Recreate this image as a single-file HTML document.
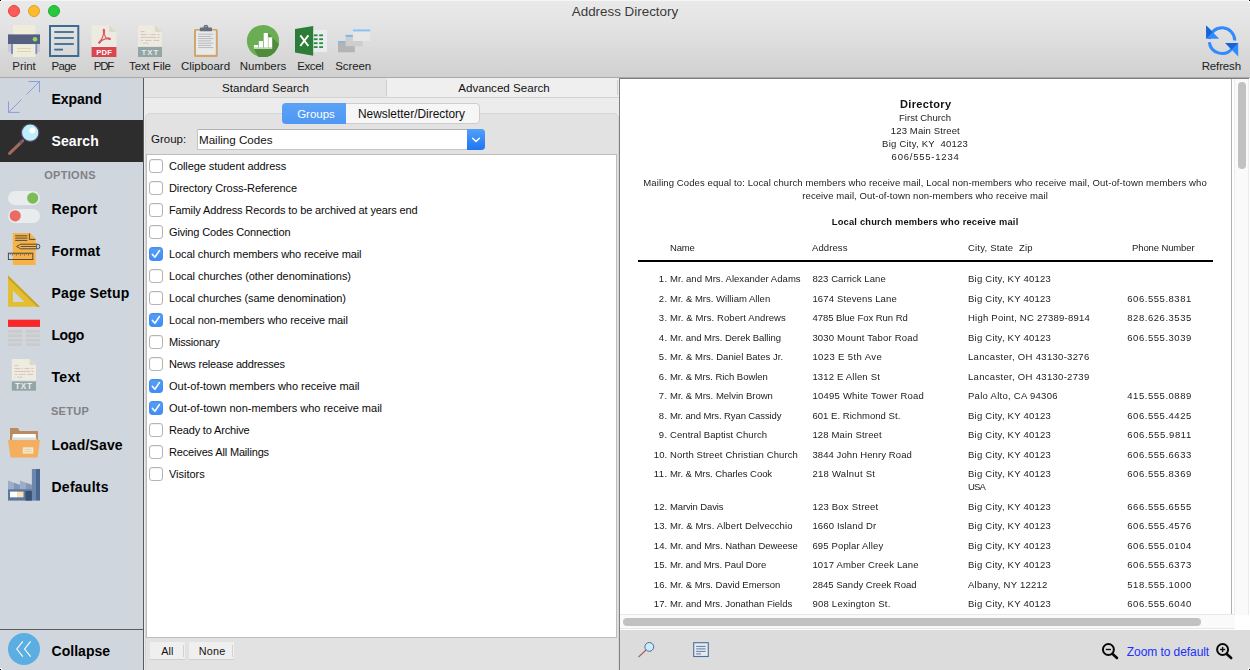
<!DOCTYPE html><html><head><meta charset="utf-8"><title>Address Directory</title><style>
*{box-sizing:border-box;margin:0;padding:0}
html,body{width:1250px;height:670px;overflow:hidden;background:#ececec;font-family:"Liberation Sans",sans-serif;color:#1d1d1d}
.abs{position:absolute}
.t{position:absolute;white-space:pre;line-height:1}
#titlebar{position:absolute;left:0;top:0;width:1250px;height:77px;background:linear-gradient(#e9e9e9 0,#e4e4e4 22px,#d0d0d0 77px);border-top:1px solid #f5f5f5}
#tbline{position:absolute;left:0;top:77px;width:1250px;height:1px;background:#aaaaaa}
.tl{position:absolute;top:5px;width:12px;height:12px;border-radius:50%}
.lbl{position:absolute;top:59px;font-size:11.5px;line-height:14px;text-align:center;width:80px;color:#1c1c1c;white-space:nowrap}
#side{position:absolute;left:0;top:78px;width:143px;height:592px;background:#cfd6de}
#sideline{position:absolute;left:143px;top:78px;width:1px;height:592px;background:#5a5a5a}
.sb{position:absolute;left:52px;font-size:14px;font-weight:700;color:#000;line-height:16px;white-space:nowrap;letter-spacing:0}
.sh{position:absolute;left:0;width:140px;text-align:center;font-size:11px;font-weight:700;color:#808085;line-height:12px;letter-spacing:.3px}
#mid{position:absolute;left:144px;top:78px;width:475px;height:592px;background:#ececec}
#right{position:absolute;left:619px;top:78px;width:631px;height:592px;background:#fff}
.cb{position:absolute;left:149px;width:14px;height:14px;border:1px solid #b4b4b4;border-radius:3px;background:#fff;box-shadow:inset 0 1px 1px rgba(0,0,0,.06)}
.cb.on{border-color:#4590f5;background:linear-gradient(#55a0f8,#3f8df6)}
.ci{position:absolute;left:169px;font-size:11px;line-height:13px;white-space:nowrap;color:#0a0a0a}
.r{position:absolute;white-space:pre;font-size:9.5px;line-height:11px;color:#222}
</style></head><body>
<div id="titlebar"></div><div id="tbline"></div>
<div class="tl" style="left:8px;background:#fc5b57;border:0.5px solid #e2443f"></div>
<div class="tl" style="left:28px;background:#fdbc2e;border:0.5px solid #e0a028"></div>
<div class="tl" style="left:48px;background:#28c840;border:0.5px solid #1dad2b"></div>
<div class="t" style="left:0;width:1250px;text-align:center;top:4px;font-size:13.4px;line-height:15px;color:#3a3a3a;letter-spacing:0">Address Directory</div>
<svg class="abs" style="left:0;top:0" width="1250" height="78" viewBox="0 0 1250 78">
<rect x="13" y="25" width="22.3" height="10" fill="#efecdc"/>
<rect x="8" y="34.4" width="32" height="9.8" fill="#555f82"/>
<rect x="8" y="44.2" width="32" height="7.8" fill="#c9cccc"/>
<rect x="11" y="44.2" width="2" height="9.6" fill="#7b88c9"/>
<rect x="35.2" y="44.2" width="2" height="9.6" fill="#7b88c9"/>
<rect x="13" y="44.2" width="22.3" height="12.8" fill="#efecdc"/>
<rect x="17" y="48" width="14" height="0.9" fill="#d9d5a8"/>
<rect x="17" y="51" width="14" height="0.9" fill="#d9d5a8"/>
<circle cx="35" cy="39.2" r="2.3" fill="#8fdc5c"/>
<rect x="50" y="26" width="28.3" height="30" fill="none" stroke="#3f6b90" stroke-width="2"/>
<line x1="54.3" y1="32" x2="73.8" y2="32" stroke="#3f6b90" stroke-width="1.8"/>
<line x1="54.3" y1="38" x2="73.8" y2="38" stroke="#3f6b90" stroke-width="1.8"/>
<line x1="54.3" y1="44" x2="73.8" y2="44" stroke="#3f6b90" stroke-width="1.8"/>
<line x1="54.3" y1="49.6" x2="63" y2="49.6" stroke="#3f6b90" stroke-width="1.8"/>
<path d="M91.6 25.2 H109.2 L116.4 32 V46 H91.6 Z" fill="#edebe1"/>
<path d="M109.2 25.2 L116.4 32 H109.2 Z" fill="#dcd9c6"/>
<rect x="91.6" y="46.8" width="24.8" height="10.2" fill="#d94650"/>
<text x="104.2" y="55" font-family="Liberation Sans" font-weight="700" font-size="7.6" fill="#fff" text-anchor="middle" letter-spacing="0.3">PDF</text>
<rect x="91.6" y="46" width="24.8" height="0.8" fill="#f7f6f0"/><rect x="138" y="46" width="24" height="0.8" fill="#f7f6f0"/>
<g fill="none" stroke="#db5862" stroke-linecap="round" stroke-linejoin="round"><path stroke-width="1.15" d="M103.9 30 C103.7 33 104.2 35.2 105.7 37.5 C107 38 108.6 38.2 109.8 38.8 M103.9 30 C104 33.5 102.6 38.6 99.3 42.5 M99.3 42.5 C101.8 40 106 38.3 109.8 38.8"/><path stroke-width="2.2" d="M103.85 29.9 L104 32.6 M99.2 42.7 L100.5 41.3 M109.8 38.85 L108.7 38.6"/></g>
<path d="M138 25.2 H154.8 L162 32 V46 H138 Z" fill="#edebe1"/>
<path d="M154.8 25.2 L162 32 H154.8 Z" fill="#dcd9c6"/>
<rect x="138" y="46.8" width="24" height="10.2" fill="#93a6a5"/>
<text x="150.4" y="55.1" font-family="Liberation Sans" font-weight="700" font-size="7.8" fill="#e4ecec" text-anchor="middle" letter-spacing="1">TXT</text>
<line x1="140.6" y1="31.6" x2="144.6" y2="31.6" stroke="#d9c2b8" stroke-width="1"/>
<line x1="140.6" y1="34.6" x2="146.6" y2="34.6" stroke="#d9c2b8" stroke-width="1"/>
<line x1="148" y1="34.6" x2="149" y2="34.6" stroke="#d9c2b8" stroke-width="1"/>
<line x1="150.6" y1="34.6" x2="155.6" y2="34.6" stroke="#d9c2b8" stroke-width="1"/>
<line x1="157.4" y1="34.6" x2="159.4" y2="34.6" stroke="#d9c2b8" stroke-width="1"/>
<line x1="140.6" y1="37.4" x2="156.4" y2="37.4" stroke="#d9c2b8" stroke-width="1"/>
<line x1="157.6" y1="37.4" x2="159.6" y2="37.4" stroke="#d9c2b8" stroke-width="1"/>
<line x1="140.6" y1="40.4" x2="143.4" y2="40.4" stroke="#d9c2b8" stroke-width="1"/>
<line x1="145" y1="40.4" x2="151.6" y2="40.4" stroke="#d9c2b8" stroke-width="1"/>
<line x1="153.2" y1="40.4" x2="159.4" y2="40.4" stroke="#d9c2b8" stroke-width="1"/>
<line x1="140.6" y1="43.2" x2="141.4" y2="43.2" stroke="#d9c2b8" stroke-width="1"/>
<line x1="143" y1="43.2" x2="148.6" y2="43.2" stroke="#d9c2b8" stroke-width="1"/>
<rect x="194" y="29" width="23.8" height="28" rx="1.6" fill="#d0a56f"/>
<rect x="196" y="30.6" width="19.8" height="24.2" fill="#e9e9e9"/>
<rect x="199.8" y="27.6" width="12.2" height="3.6" rx="0.8" fill="#66707c"/>
<path d="M203.6 28 V26.4 Q203.6 24.8 205.9 24.8 Q208.2 24.8 208.2 26.4 V28 Z" fill="#66707c"/>
<circle cx="205.9" cy="26.6" r="0.8" fill="#aab0b8"/>
<line x1="198.2" y1="34.2" x2="213.4" y2="34.2" stroke="#b6babf" stroke-width="1"/>
<line x1="198.2" y1="36.5" x2="211.2" y2="36.5" stroke="#b6babf" stroke-width="1"/>
<line x1="198.2" y1="38.6" x2="213.4" y2="38.6" stroke="#b6babf" stroke-width="1"/>
<line x1="198.2" y1="40.9" x2="211.2" y2="40.9" stroke="#b6babf" stroke-width="1"/>
<line x1="198.2" y1="43.2" x2="213.4" y2="43.2" stroke="#b6babf" stroke-width="1"/>
<line x1="198.2" y1="45.4" x2="211.2" y2="45.4" stroke="#b6babf" stroke-width="1"/>
<line x1="198.2" y1="47.6" x2="213.4" y2="47.6" stroke="#b6babf" stroke-width="1"/>
<circle cx="263" cy="41" r="16.1" fill="#6bad53"/>
<clipPath id="nc"><circle cx="263" cy="41" r="16.1"/></clipPath>
<path clip-path="url(#nc)" d="M267.8 33 L272 37.3 L290 55.3 V80 H272 L253.9 48.8 H272 V47 Z" fill="#4f8b3c"/>
<path clip-path="url(#nc)" d="M253.9 48.8 L272.2 48.8 L290 66 L272 80 Z" fill="#4f8b3c"/>
<rect x="253.9" y="45" width="4.2" height="2.6" fill="#fff"/>
<rect x="258.8" y="41" width="4.2" height="6.6" fill="#fff"/>
<rect x="263.7" y="33" width="4.2" height="14.6" fill="#fff"/>
<rect x="268.4" y="37.3" width="3.8" height="10.3" fill="#fff"/>
<rect x="253.9" y="47.6" width="18.3" height="1.2" fill="#d5e8cc"/>
<rect x="312" y="30" width="15" height="22" fill="#e9edf1"/>
<rect x="313.8" y="34.4" width="3.8" height="1.8" fill="#2f8a3c"/>
<rect x="319.2" y="34.4" width="3.8" height="1.8" fill="#2f8a3c"/>
<rect x="313.8" y="38.3" width="3.8" height="1.8" fill="#2f8a3c"/>
<rect x="319.2" y="38.3" width="3.8" height="1.8" fill="#2f8a3c"/>
<rect x="313.8" y="42.3" width="3.8" height="1.8" fill="#2f8a3c"/>
<rect x="319.2" y="42.3" width="3.8" height="1.8" fill="#2f8a3c"/>
<rect x="313.8" y="46.2" width="3.8" height="1.8" fill="#2f8a3c"/>
<rect x="319.2" y="46.2" width="3.8" height="1.8" fill="#2f8a3c"/>
<path d="M295 29 L313.2 25.9 V55.8 L295 52.4 Z" fill="#2c7d38"/>
<path d="M300.3 35.4 L308.4 46 M308.4 35.4 L300.3 46" stroke="#fff" stroke-width="1.9" fill="none"/>
<rect x="338" y="41" width="16.8" height="11.3" fill="#b4b4b4"/><rect x="338" y="41" width="16.8" height="2" fill="#85b9e6"/>
<rect x="345.6" y="34.9" width="17" height="11.3" fill="#cecece"/><rect x="345.6" y="34.9" width="17" height="2" fill="#7db9ee"/>
<rect x="352.9" y="29.4" width="17.3" height="11.6" fill="#e7e7e7"/><rect x="352.9" y="29.4" width="17.3" height="2" fill="#86c3f6"/>
<g fill="none" stroke="#2f8bff" stroke-width="3"><path d="M1209.3 39 A12.8 12.8 0 0 1 1234.8 40.4"/><path d="M1209.3 42.2 A12.8 12.8 0 0 0 1232 48.6"/></g>
<path d="M1206.2 25.4 L1206.2 38.8 L1219.2 38.8 Z" fill="#2f8bff"/>
<path d="M1206.2 25.4 L1212.7 32.1 L1206.2 38.8 Z" fill="#1a62d6"/>
<path d="M1238.2 56.4 L1238.2 43 L1225.2 43 Z" fill="#2f8bff"/>
<path d="M1238.2 43 L1225.2 43 L1231.6 49.6 Z" fill="#1a62d6"/>
</svg>
<div class="lbl" style="left:-16.02px;letter-spacing:-0.037px">Print</div>
<div class="lbl" style="left:23.67px;letter-spacing:-0.653px">Page</div>
<div class="lbl" style="left:63.38px;letter-spacing:-1.25px">PDF</div>
<div class="lbl" style="left:109.95px;letter-spacing:-0.102px">Text File</div>
<div class="lbl" style="left:165.50px;letter-spacing:-0.003px">Clipboard</div>
<div class="lbl" style="left:223.00px;letter-spacing:-0.009px">Numbers</div>
<div class="lbl" style="left:270.31px;letter-spacing:-0.38px">Excel</div>
<div class="lbl" style="left:313.14px;letter-spacing:-0.128px">Screen</div>
<div class="lbl" style="left:1181.34px;letter-spacing:-0.128px">Refresh</div>
<div id="side"></div><div id="sideline"></div>
<div class="abs" style="left:0;top:120px;width:143px;height:42px;background:#2d2d2d"></div>
<div class="abs" style="left:0;top:629px;width:143px;height:1px;background:#5a5a5a"></div>
<svg class="abs" style="left:0;top:78px" width="143" height="592" viewBox="0 78 143 592">
<g fill="none" stroke="#8c9cd8" stroke-width="1"><path d="M26.5 94.5 L39.5 81.5 M28.5 81.5 H39.5 V92.2"/><path d="M21.5 99.5 L8.5 112.4 M8.5 101.5 V112.4 H19.5"/></g>
<line x1="22.6" y1="140.8" x2="9.6" y2="153.4" stroke="#a56a5c" stroke-width="3" stroke-linecap="round"/>
<line x1="22.6" y1="140.8" x2="20" y2="143.3" stroke="#6a5a78" stroke-width="3"/>
<circle cx="30.2" cy="132.7" r="8.7" fill="#bdeefb" stroke="#5b4a63" stroke-width="1.2"/>
<circle cx="32.4" cy="130.6" r="3" fill="#fff"/>
<rect x="8" y="191" width="32" height="14.2" rx="7.1" fill="#e8eced"/>
<circle cx="32.7" cy="198.1" r="5.6" fill="#7cbb55"/>
<rect x="8" y="208.9" width="32" height="14.2" rx="7.1" fill="#e8eced"/>
<circle cx="15.2" cy="215.8" r="5.6" fill="#e96b64"/>
<path d="M12.8 233 H30 L35.6 238.6 V265 H12.8 Z" fill="#f9b344"/>
<path d="M29.4 233.4 V239.4 H35.4" fill="none" stroke="#4b4b4b" stroke-width="1"/>
<line x1="15.2" y1="235.8" x2="27.4" y2="235.8" stroke="#4b4b4b" stroke-width="1"/>
<line x1="15.2" y1="238.1" x2="27.4" y2="238.1" stroke="#4b4b4b" stroke-width="1"/>
<line x1="15.2" y1="240.4" x2="27.4" y2="240.4" stroke="#4b4b4b" stroke-width="1"/>
<path d="M16.6 246.5 L20.6 244.2 H38 Q39.8 244.2 39.8 246.5 Q39.8 248.8 38 248.8 H20.6 Z" fill="none" stroke="#4b4b4b" stroke-width="1"/>
<path d="M20.6 246.5 H36.4 M36.6 244.2 V248.8" stroke="#4b4b4b" stroke-width="0.9" fill="none"/>
<rect x="8.4" y="253.2" width="24.4" height="6.3" fill="none" stroke="#4b4b4b" stroke-width="1"/>
<line x1="10.4" y1="253.2" x2="10.4" y2="254.79999999999998" stroke="#4b4b4b" stroke-width="0.6"/>
<line x1="12.4" y1="253.2" x2="12.4" y2="255.79999999999998" stroke="#4b4b4b" stroke-width="0.6"/>
<line x1="14.4" y1="253.2" x2="14.4" y2="254.79999999999998" stroke="#4b4b4b" stroke-width="0.6"/>
<line x1="16.4" y1="253.2" x2="16.4" y2="255.79999999999998" stroke="#4b4b4b" stroke-width="0.6"/>
<line x1="18.4" y1="253.2" x2="18.4" y2="254.79999999999998" stroke="#4b4b4b" stroke-width="0.6"/>
<line x1="20.4" y1="253.2" x2="20.4" y2="255.79999999999998" stroke="#4b4b4b" stroke-width="0.6"/>
<line x1="22.4" y1="253.2" x2="22.4" y2="254.79999999999998" stroke="#4b4b4b" stroke-width="0.6"/>
<line x1="24.4" y1="253.2" x2="24.4" y2="255.79999999999998" stroke="#4b4b4b" stroke-width="0.6"/>
<line x1="26.4" y1="253.2" x2="26.4" y2="254.79999999999998" stroke="#4b4b4b" stroke-width="0.6"/>
<line x1="28.4" y1="253.2" x2="28.4" y2="255.79999999999998" stroke="#4b4b4b" stroke-width="0.6"/>
<line x1="30.4" y1="253.2" x2="30.4" y2="254.79999999999998" stroke="#4b4b4b" stroke-width="0.6"/>
<rect x="12.8" y="253.2" width="0" height="0"/>
<path fill-rule="evenodd" d="M8.1 275.4 L39.9 306.7 H8.1 Z M13 290.8 V301.9 H24.6 Z" fill="#e3be2e"/>
<path d="M8.1 275.4 L39.9 306.7 L37 306.7 L8.1 278.4 Z" fill="#c9a428"/>
<rect x="8" y="319.7" width="32" height="7.2" fill="#f92828"/>
<rect x="8" y="330" width="14" height="2.8" fill="#cbcbcb"/><rect x="26" y="330" width="14" height="2.8" fill="#cbcbcb"/>
<rect x="8" y="334.3" width="14" height="2.8" fill="#cbcbcb"/><rect x="26" y="334.3" width="14" height="2.8" fill="#cbcbcb"/>
<rect x="8" y="338.8" width="14" height="2.8" fill="#cbcbcb"/><rect x="26" y="338.8" width="14" height="2.8" fill="#cbcbcb"/>
<rect x="8" y="343.2" width="14" height="2.8" fill="#cbcbcb"/><rect x="26" y="343.2" width="14" height="2.8" fill="#cbcbcb"/>
<path d="M11.8 359 H29.6 L36 365 V380.6 H11.8 Z" fill="#eeece1"/>
<path d="M29.6 359 L36 365 H29.6 Z" fill="#dcd9c4"/>
<rect x="11.8" y="381.4" width="24.2" height="9.3" fill="#93a6a5"/>
<text x="24" y="389.1" font-family="Liberation Sans" font-weight="700" font-size="8.2" fill="#e9efee" text-anchor="middle" letter-spacing="0.8">TXT</text>
<line x1="14.6" y1="365.6" x2="18.6" y2="365.6" stroke="#d9c2b8" stroke-width="1"/>
<line x1="14.6" y1="368.6" x2="20.6" y2="368.6" stroke="#d9c2b8" stroke-width="1"/>
<line x1="22" y1="368.6" x2="23" y2="368.6" stroke="#d9c2b8" stroke-width="1"/>
<line x1="24.6" y1="368.6" x2="29.6" y2="368.6" stroke="#d9c2b8" stroke-width="1"/>
<line x1="31.4" y1="368.6" x2="33.4" y2="368.6" stroke="#d9c2b8" stroke-width="1"/>
<line x1="14.6" y1="371.4" x2="30.4" y2="371.4" stroke="#d9c2b8" stroke-width="1"/>
<line x1="31.6" y1="371.4" x2="33.6" y2="371.4" stroke="#d9c2b8" stroke-width="1"/>
<line x1="14.6" y1="374.4" x2="17.4" y2="374.4" stroke="#d9c2b8" stroke-width="1"/>
<line x1="19" y1="374.4" x2="25.6" y2="374.4" stroke="#d9c2b8" stroke-width="1"/>
<line x1="27.2" y1="374.4" x2="33.4" y2="374.4" stroke="#d9c2b8" stroke-width="1"/>
<line x1="14.6" y1="377.2" x2="15.4" y2="377.2" stroke="#d9c2b8" stroke-width="1"/>
<line x1="17" y1="377.2" x2="22.6" y2="377.2" stroke="#d9c2b8" stroke-width="1"/>
<path d="M10 428.6 Q10 428 10.6 428 H18 L19.6 431 H37.4 Q38 431 38 431.6 V442 H10 Z" fill="#b98b60"/>
<path d="M12.8 434 H35.6 L36.4 440.4 H12 Z" fill="#fff"/>
<path d="M12.4 437.4 H36 L36.4 440.4 H12 Z" fill="#d8dde0"/>
<path d="M8 440 H40 L37.6 457.6 H10.5 Z" fill="#f5ae5e"/>
<rect x="22.8" y="447.3" width="10.5" height="6.3" fill="#f1e9cb"/>
<line x1="24.4" y1="449.4" x2="31.6" y2="449.4" stroke="#d8cda8" stroke-width="0.9"/><line x1="24.4" y1="451.5" x2="31.6" y2="451.5" stroke="#d8cda8" stroke-width="0.9"/>
<rect x="31.9" y="469" width="4.1" height="31.6" fill="#6c87ad"/><rect x="36" y="469" width="4" height="31.6" fill="#4a6692"/>
<path d="M8 480.5 L19.9 485 V480.5 L31.9 485 V489.5 H8 Z" fill="#9eadc7"/>
<path d="M14 482.8 L19.9 485 V489.5 H14 Z M26 482.8 L31.9 485 V489.5 H26 Z" fill="#8397b8"/>
<rect x="8" y="489.2" width="23.9" height="11.4" fill="#5b79a0"/>
<rect x="10" y="491.6" width="7" height="5.7" fill="#fff"/><rect x="17" y="491.6" width="6.5" height="5.7" fill="#fde1b2"/>
<rect x="25.5" y="491" width="6.4" height="9.6" fill="#3c5172"/>
<circle cx="24" cy="649" r="16" fill="#5baee1"/>
<path d="M22.8 641.4 L16.8 649 L22.8 656.6 M30.6 641.4 L24.6 649 L30.6 656.6" fill="none" stroke="#fff" stroke-width="1.1"/>
</svg>
<div class="sb" style="left:51.5px;top:91px;color:#000;letter-spacing:-0.073px">Expand</div>
<div class="sb" style="left:51.5px;top:133px;color:#fff;letter-spacing:0.1px">Search</div>
<div class="sb" style="left:51.5px;top:201px;color:#000;letter-spacing:0.118px">Report</div>
<div class="sb" style="left:51.5px;top:243px;color:#000;letter-spacing:0.25px">Format</div>
<div class="sb" style="left:51.5px;top:285px;color:#000;letter-spacing:0.162px">Page Setup</div>
<div class="sb" style="left:51.5px;top:327px;color:#000;letter-spacing:-0.436px">Logo</div>
<div class="sb" style="left:51.5px;top:369px;color:#000;letter-spacing:0.317px">Text</div>
<div class="sb" style="left:51.5px;top:437px;color:#000;letter-spacing:0.134px">Load/Save</div>
<div class="sb" style="left:51.5px;top:479px;color:#000;letter-spacing:0.252px">Defaults</div>
<div class="sb" style="left:51.5px;top:642.5px;color:#000;letter-spacing:0.035px">Collapse</div>
<div class="sh" style="top:169px">OPTIONS</div>
<div class="sh" style="top:405px">SETUP</div>
<div id="mid"></div>
<div class="abs" style="left:144px;top:78px;width:243px;height:19px;background:#e4e4e4"></div>
<div class="abs" style="left:387px;top:78px;width:231px;height:19px;background:#efefef"></div>
<div class="abs" style="left:144px;top:97px;width:475px;height:1px;background:#d2d2d2"></div>
<div class="abs" style="left:386px;top:80px;width:1px;height:16px;background:#cfcfcf"></div>
<div class="abs" style="left:617px;top:80px;width:1px;height:15px;background:#cfcfcf"></div>
<div class="t" style="left:144px;width:243px;text-align:center;top:81px;font-size:11.6px;line-height:13px;color:#111">Standard Search</div>
<div class="t" style="left:388.5px;width:231px;text-align:center;top:81px;font-size:11.6px;line-height:13px;color:#111">Advanced Search</div>
<div class="abs" style="left:145px;top:113px;width:474px;height:560px;background:#e2e2e2;border:1px solid #d6d6d6;border-radius:5px"></div>
<div class="abs" style="left:282px;top:103px;width:198px;height:21px;border-radius:4px;background:#f6f6f6;border:1px solid #cdcdcd"></div>
<div class="abs" style="left:282px;top:103px;width:64px;height:21px;border-radius:4px 0 0 4px;background:linear-gradient(#5ba2f7,#4f97f3)"></div>
<div class="t" style="left:284px;width:64px;text-align:center;top:108px;font-size:11.5px;line-height:13px;color:#fff">Groups</div>
<div class="t" style="left:345px;width:133px;text-align:center;top:108px;font-size:11.9px;line-height:13px;color:#111">Newsletter/Directory</div>
<div class="t" style="left:151px;top:133px;font-size:11.5px;line-height:13px;color:#111">Group:</div>
<div class="abs" style="left:197px;top:129px;width:288px;height:21px;background:#fff;border:1px solid #c4c4c4;border-top-color:#b2b2b2;border-radius:0 4px 4px 0"></div>
<div class="abs" style="left:467px;top:129px;width:18px;height:21px;border-radius:0 4px 4px 0;background:linear-gradient(#52a0fb,#1f74f2)"></div>
<svg class="abs" style="left:467px;top:129px" width="18" height="21" viewBox="0 0 18 21"><path d="M5.6 9.2 L9 12.4 L12.4 9.2" fill="none" stroke="#fff" stroke-width="1.5" stroke-linecap="round" stroke-linejoin="round"/></svg>
<div class="t" style="left:199px;top:132.7px;font-size:11.6px;line-height:13px;color:#111">Mailing Codes</div>
<div class="abs" style="left:146px;top:154px;width:471px;height:484px;background:#fff;border:1px solid #bdbdbd"></div>
<div class="cb" style="top:159px"></div>
<div class="ci" style="top:160.1px;letter-spacing:-0.065px">College student address</div>
<div class="cb" style="top:181px"></div>
<div class="ci" style="top:182.1px;letter-spacing:-0.088px">Directory Cross-Reference</div>
<div class="cb" style="top:203px"></div>
<div class="ci" style="top:204.1px;letter-spacing:-0.128px">Family Address Records to be archived at years end</div>
<div class="cb" style="top:225px"></div>
<div class="ci" style="top:226.1px;letter-spacing:-0.147px">Giving Codes Connection</div>
<div class="cb on" style="top:247px"></div><svg class="abs" style="left:149px;top:247px" width="14" height="14" viewBox="0 0 14 14"><path d="M3.4 7.4 L5.9 10.2 L10.4 3.6" fill="none" stroke="#fff" stroke-width="1.6" stroke-linecap="round" stroke-linejoin="round"/></svg>
<div class="ci" style="top:248.1px;letter-spacing:-0.104px">Local church members who receive mail</div>
<div class="cb" style="top:269px"></div>
<div class="ci" style="top:270.1px;letter-spacing:-0.059px">Local churches (other denominations)</div>
<div class="cb" style="top:291px"></div>
<div class="ci" style="top:292.1px;letter-spacing:-0.105px">Local churches (same denomination)</div>
<div class="cb on" style="top:313px"></div><svg class="abs" style="left:149px;top:313px" width="14" height="14" viewBox="0 0 14 14"><path d="M3.4 7.4 L5.9 10.2 L10.4 3.6" fill="none" stroke="#fff" stroke-width="1.6" stroke-linecap="round" stroke-linejoin="round"/></svg>
<div class="ci" style="top:314.1px;letter-spacing:-0.1px">Local non-members who receive mail</div>
<div class="cb" style="top:335px"></div>
<div class="ci" style="top:336.1px;letter-spacing:-0.197px">Missionary</div>
<div class="cb" style="top:357px"></div>
<div class="ci" style="top:358.1px;letter-spacing:-0.212px">News release addresses</div>
<div class="cb on" style="top:379px"></div><svg class="abs" style="left:149px;top:379px" width="14" height="14" viewBox="0 0 14 14"><path d="M3.4 7.4 L5.9 10.2 L10.4 3.6" fill="none" stroke="#fff" stroke-width="1.6" stroke-linecap="round" stroke-linejoin="round"/></svg>
<div class="ci" style="top:380.1px;letter-spacing:-0.024px">Out-of-town members who receive mail</div>
<div class="cb on" style="top:401px"></div><svg class="abs" style="left:149px;top:401px" width="14" height="14" viewBox="0 0 14 14"><path d="M3.4 7.4 L5.9 10.2 L10.4 3.6" fill="none" stroke="#fff" stroke-width="1.6" stroke-linecap="round" stroke-linejoin="round"/></svg>
<div class="ci" style="top:402.1px;letter-spacing:-0.009px">Out-of-town non-members who receive mail</div>
<div class="cb" style="top:423px"></div>
<div class="ci" style="top:424.1px;letter-spacing:-0.164px">Ready to Archive</div>
<div class="cb" style="top:445px"></div>
<div class="ci" style="top:446.1px;letter-spacing:-0.161px">Receives All Mailings</div>
<div class="cb" style="top:467px"></div>
<div class="ci" style="top:468.1px;letter-spacing:-0.023px">Visitors</div>
<div class="abs" style="left:150px;top:642px;width:35px;height:17px;background:#efefef;box-shadow:0 0.5px 0.5px rgba(0,0,0,.08)"></div>
<div class="abs" style="left:189px;top:642px;width:45px;height:17px;background:#efefef;box-shadow:0 0.5px 0.5px rgba(0,0,0,.08)"></div>
<div class="abs" style="left:183px;top:645px;width:1px;height:12px;background:#d2d2d2"></div>
<div class="abs" style="left:232px;top:645px;width:1px;height:12px;background:#d2d2d2"></div>
<div class="t" style="left:161.3px;top:645.2px;font-size:10.8px;line-height:12px;color:#111;letter-spacing:0.048px">All</div>
<div class="t" style="left:198.7px;top:645.2px;font-size:10.8px;line-height:12px;color:#111;letter-spacing:0.227px">None</div>
<div id="right"></div>
<div class="abs" style="left:619px;top:78px;width:630px;height:1px;background:#7e7e7e"></div>
<div class="abs" style="left:619px;top:78px;width:1px;height:592px;background:#808080"></div>
<div class="abs" style="left:1231px;top:79px;width:1px;height:536px;background:#b0b0b0"></div>
<div class="abs" style="left:1234px;top:79px;width:15px;height:536px;background:#fafafa;border-left:1px solid #ececec;border-right:1px solid #ececec"></div>
<div class="abs" style="left:1238px;top:82px;width:8px;height:87px;border-radius:4px;background:#c1c1c1"></div>
<div class="abs" style="left:620px;top:614px;width:615px;height:15px;background:#fafafa;border-top:1px solid #e8e8e8;border-bottom:1px solid #e8e8e8"></div>
<div class="abs" style="left:623px;top:618px;width:578px;height:8px;border-radius:4px;background:#c1c1c1"></div>
<div class="abs" style="left:620px;top:630px;width:630px;height:40px;background:#dcdcdc"></div>
<svg class="abs" style="left:620px;top:630px" width="630" height="40" viewBox="620 630 630 40">
<line x1="645.6" y1="650.4" x2="639" y2="656.6" stroke="#a05a5a" stroke-width="1.3" stroke-linecap="round"/>
<circle cx="649.3" cy="646.9" r="4.4" fill="#c6effb" stroke="#4a5a86" stroke-width="0.9"/>
<rect x="693.7" y="642.7" width="14.6" height="13.8" fill="#e6e9ee" stroke="#47709a" stroke-width="1.1"/>
<line x1="696.2" y1="646.4" x2="705.6" y2="646.4" stroke="#47709a" stroke-width="0.9"/>
<line x1="696.2" y1="648.9" x2="705.6" y2="648.9" stroke="#47709a" stroke-width="0.9"/>
<line x1="696.2" y1="651.4" x2="705.6" y2="651.4" stroke="#47709a" stroke-width="0.9"/>
<line x1="696.2" y1="653.9" x2="701" y2="653.9" stroke="#47709a" stroke-width="0.9"/>
<circle cx="1108.4" cy="649.5" r="5.5" fill="none" stroke="#0a0a0a" stroke-width="2"/>
<line x1="1112.6" y1="654" x2="1117" y2="658" stroke="#0a0a0a" stroke-width="2.6" stroke-linecap="round"/>
<line x1="1105.8" y1="649.5" x2="1111" y2="649.5" stroke="#111" stroke-width="1.4"/>
<circle cx="1222.6" cy="649.5" r="5.5" fill="none" stroke="#0a0a0a" stroke-width="2"/>
<line x1="1227" y1="654.2" x2="1231.2" y2="658" stroke="#0a0a0a" stroke-width="2.6" stroke-linecap="round"/>
<line x1="1220" y1="649.5" x2="1225.2" y2="649.5" stroke="#111" stroke-width="1.4"/>
<line x1="1222.6" y1="646.9" x2="1222.6" y2="652.1" stroke="#111" stroke-width="1.4"/>
</svg>
<div class="t" style="left:1126.8px;top:645.5px;font-size:12px;line-height:13px;color:#2030fa;letter-spacing:-0.07px">Zoom to default</div>
<div id="rep" style="position:absolute;left:0;top:0;width:1250px;height:670px;will-change:transform">
<div class="r" style="top:98.66px;font-size:11px;letter-spacing:0.35px;font-weight:700;color:#111;left:625.5px;width:600px;text-align:center;padding-left:0.35px;">Directory</div>
<div class="r" style="top:112.36px;font-size:9.5px;letter-spacing:0.02px;left:625px;width:600px;text-align:center;padding-left:0.02px;">First Church</div>
<div class="r" style="top:125.36px;font-size:9.5px;letter-spacing:0.13px;left:625.3px;width:600px;text-align:center;padding-left:0.13px;">123 Main Street</div>
<div class="r" style="top:138.36px;font-size:9.5px;letter-spacing:0.24px;left:625px;width:600px;text-align:center;padding-left:0.24px;">Big City, KY  40123</div>
<div class="r" style="top:151.16px;font-size:9.5px;letter-spacing:0.778px;left:625.2px;width:600px;text-align:center;padding-left:0.778px;">606/555-1234</div>
<div class="r" style="top:177.36px;font-size:9.5px;letter-spacing:0.1px;left:625px;width:600px;text-align:center;padding-left:0.1px;">Mailing Codes equal to: Local church members who receive mail, Local non-members who receive mail, Out-of-town members who</div>
<div class="r" style="top:190.36px;font-size:9.5px;letter-spacing:0.1px;left:625px;width:600px;text-align:center;padding-left:0.1px;">receive mail, Out-of-town non-members who receive mail</div>
<div class="r" style="top:217.23px;font-size:9.3px;letter-spacing:0.213px;font-weight:700;color:#111;left:625px;width:600px;text-align:center;padding-left:0.213px;">Local church members who receive mail</div>
<div class="r" style="top:242.36px;font-size:9.5px;letter-spacing:-0.2px;left:670px;">Name</div>
<div class="r" style="top:242.36px;font-size:9.5px;letter-spacing:0.1px;left:812px;">Address</div>
<div class="r" style="top:242.36px;font-size:9.5px;letter-spacing:0.2px;left:968px;">City, State  Zip</div>
<div class="r" style="top:242.36px;font-size:9.5px;letter-spacing:-0.118px;left:1132px;">Phone Number</div>
<div class="abs" style="left:638px;top:260px;width:575px;height:2px;background:#000"></div>
<div class="r" style="top:272.86px;font-size:9.5px;letter-spacing:0.477px;right:582.32px;">1.</div>
<div class="r" style="top:272.86px;font-size:9.5px;letter-spacing:0.046px;left:670px;">Mr. and Mrs. Alexander Adams</div>
<div class="r" style="top:272.86px;font-size:9.5px;letter-spacing:0.064px;left:812.4px;">823 Carrick Lane</div>
<div class="r" style="top:272.86px;font-size:9.5px;letter-spacing:0.232px;left:968px;">Big City, KY 40123</div>
<div class="r" style="top:292.86px;font-size:9.5px;letter-spacing:0.477px;right:582.32px;">2.</div>
<div class="r" style="top:292.86px;font-size:9.5px;letter-spacing:0.019px;left:670px;">Mr. &amp; Mrs. William Allen</div>
<div class="r" style="top:292.86px;font-size:9.5px;letter-spacing:0.158px;left:812.4px;">1674 Stevens Lane</div>
<div class="r" style="top:292.86px;font-size:9.5px;letter-spacing:0.232px;left:968px;">Big City, KY 40123</div>
<div class="r" style="top:292.86px;font-size:9.5px;letter-spacing:0.535px;left:1127.3px;">606.555.8381</div>
<div class="r" style="top:311.86px;font-size:9.5px;letter-spacing:0.477px;right:582.32px;">3.</div>
<div class="r" style="top:311.86px;font-size:9.5px;letter-spacing:0.096px;left:670px;">Mr. &amp; Mrs. Robert Andrews</div>
<div class="r" style="top:311.86px;font-size:9.5px;letter-spacing:-0.038px;left:812.4px;">4785 Blue Fox Run Rd</div>
<div class="r" style="top:311.86px;font-size:9.5px;letter-spacing:0.23px;left:968px;">High Point, NC 27389-8914</div>
<div class="r" style="top:311.86px;font-size:9.5px;letter-spacing:0.535px;left:1127.3px;">828.626.3535</div>
<div class="r" style="top:331.86px;font-size:9.5px;letter-spacing:0.477px;right:582.32px;">4.</div>
<div class="r" style="top:331.86px;font-size:9.5px;letter-spacing:-0.037px;left:670px;">Mr. and Mrs. Derek Balling</div>
<div class="r" style="top:331.86px;font-size:9.5px;letter-spacing:0.192px;left:812.4px;">3030 Mount Tabor Road</div>
<div class="r" style="top:331.86px;font-size:9.5px;letter-spacing:0.232px;left:968px;">Big City, KY 40123</div>
<div class="r" style="top:331.86px;font-size:9.5px;letter-spacing:0.535px;left:1127.3px;">606.555.3039</div>
<div class="r" style="top:350.86px;font-size:9.5px;letter-spacing:0.477px;right:582.32px;">5.</div>
<div class="r" style="top:350.86px;font-size:9.5px;letter-spacing:0.025px;left:670px;">Mr. &amp; Mrs. Daniel Bates Jr.</div>
<div class="r" style="top:350.86px;font-size:9.5px;letter-spacing:0.387px;left:812.4px;">1023 E 5th Ave</div>
<div class="r" style="top:350.86px;font-size:9.5px;letter-spacing:0.309px;left:968px;">Lancaster, OH 43130-3276</div>
<div class="r" style="top:370.86px;font-size:9.5px;letter-spacing:0.477px;right:582.32px;">6.</div>
<div class="r" style="top:370.86px;font-size:9.5px;letter-spacing:-0.044px;left:670px;">Mr. &amp; Mrs. Rich Bowlen</div>
<div class="r" style="top:370.86px;font-size:9.5px;letter-spacing:0.174px;left:812.4px;">1312 E Allen St</div>
<div class="r" style="top:370.86px;font-size:9.5px;letter-spacing:0.309px;left:968px;">Lancaster, OH 43130-2739</div>
<div class="r" style="top:389.86px;font-size:9.5px;letter-spacing:0.477px;right:582.32px;">7.</div>
<div class="r" style="top:389.86px;font-size:9.5px;letter-spacing:-0.002px;left:670px;">Mr. &amp; Mrs. Melvin Brown</div>
<div class="r" style="top:389.86px;font-size:9.5px;letter-spacing:0.238px;left:812.4px;">10495 White Tower Road</div>
<div class="r" style="top:389.86px;font-size:9.5px;letter-spacing:0.277px;left:968px;">Palo Alto, CA 94306</div>
<div class="r" style="top:389.86px;font-size:9.5px;letter-spacing:0.535px;left:1127.3px;">415.555.0889</div>
<div class="r" style="top:409.86px;font-size:9.5px;letter-spacing:0.477px;right:582.32px;">8.</div>
<div class="r" style="top:409.86px;font-size:9.5px;letter-spacing:-0.106px;left:670px;">Mr. and Mrs. Ryan Cassidy</div>
<div class="r" style="top:409.86px;font-size:9.5px;letter-spacing:0.043px;left:812.4px;">601 E. Richmond St.</div>
<div class="r" style="top:409.86px;font-size:9.5px;letter-spacing:0.232px;left:968px;">Big City, KY 40123</div>
<div class="r" style="top:409.86px;font-size:9.5px;letter-spacing:0.535px;left:1127.3px;">606.555.4425</div>
<div class="r" style="top:428.86px;font-size:9.5px;letter-spacing:0.477px;right:582.32px;">9.</div>
<div class="r" style="top:428.86px;font-size:9.5px;letter-spacing:0.068px;left:670px;">Central Baptist Church</div>
<div class="r" style="top:428.86px;font-size:9.5px;letter-spacing:0.159px;left:812.4px;">128 Main Street</div>
<div class="r" style="top:428.86px;font-size:9.5px;letter-spacing:0.232px;left:968px;">Big City, KY 40123</div>
<div class="r" style="top:428.86px;font-size:9.5px;letter-spacing:0.599px;left:1127.3px;">606.555.9811</div>
<div class="r" style="top:448.86px;font-size:9.5px;letter-spacing:0.097px;right:582.70px;">10.</div>
<div class="r" style="top:448.86px;font-size:9.5px;letter-spacing:0.118px;left:670px;">North Street Christian Church</div>
<div class="r" style="top:448.86px;font-size:9.5px;letter-spacing:0.089px;left:812.4px;">3844 John Henry Road</div>
<div class="r" style="top:448.86px;font-size:9.5px;letter-spacing:0.232px;left:968px;">Big City, KY 40123</div>
<div class="r" style="top:448.86px;font-size:9.5px;letter-spacing:0.535px;left:1127.3px;">606.555.6633</div>
<div class="r" style="top:467.86px;font-size:9.5px;letter-spacing:0.449px;right:582.35px;">11.</div>
<div class="r" style="top:467.86px;font-size:9.5px;letter-spacing:-0.062px;left:670px;">Mr. &amp; Mrs. Charles Cook</div>
<div class="r" style="top:467.86px;font-size:9.5px;letter-spacing:0.273px;left:812.4px;">218 Walnut St</div>
<div class="r" style="top:467.86px;font-size:9.5px;letter-spacing:0.232px;left:968px;">Big City, KY 40123</div>
<div class="r" style="top:467.86px;font-size:9.5px;letter-spacing:0.535px;left:1127.3px;">606.555.8369</div>
<div class="r" style="top:480.86px;font-size:9.5px;letter-spacing:-0.867px;left:968px;">USA</div>
<div class="r" style="top:500.86px;font-size:9.5px;letter-spacing:0.097px;right:582.70px;">12.</div>
<div class="r" style="top:500.86px;font-size:9.5px;letter-spacing:-0.127px;left:670px;">Marvin Davis</div>
<div class="r" style="top:500.86px;font-size:9.5px;letter-spacing:0.227px;left:812.4px;">123 Box Street</div>
<div class="r" style="top:500.86px;font-size:9.5px;letter-spacing:0.232px;left:968px;">Big City, KY 40123</div>
<div class="r" style="top:500.86px;font-size:9.5px;letter-spacing:0.535px;left:1127.3px;">666.555.6555</div>
<div class="r" style="top:519.86px;font-size:9.5px;letter-spacing:0.097px;right:582.70px;">13.</div>
<div class="r" style="top:519.86px;font-size:9.5px;letter-spacing:0.118px;left:670px;">Mr. &amp; Mrs. Albert Delvecchio</div>
<div class="r" style="top:519.86px;font-size:9.5px;letter-spacing:0.147px;left:812.4px;">1660 Island Dr</div>
<div class="r" style="top:519.86px;font-size:9.5px;letter-spacing:0.232px;left:968px;">Big City, KY 40123</div>
<div class="r" style="top:519.86px;font-size:9.5px;letter-spacing:0.535px;left:1127.3px;">606.555.4576</div>
<div class="r" style="top:539.86px;font-size:9.5px;letter-spacing:0.097px;right:582.70px;">14.</div>
<div class="r" style="top:539.86px;font-size:9.5px;letter-spacing:-0.016px;left:670px;">Mr. and Mrs. Nathan Deweese</div>
<div class="r" style="top:539.86px;font-size:9.5px;letter-spacing:0.149px;left:812.4px;">695 Poplar Alley</div>
<div class="r" style="top:539.86px;font-size:9.5px;letter-spacing:0.232px;left:968px;">Big City, KY 40123</div>
<div class="r" style="top:539.86px;font-size:9.5px;letter-spacing:0.535px;left:1127.3px;">606.555.0104</div>
<div class="r" style="top:558.86px;font-size:9.5px;letter-spacing:0.097px;right:582.70px;">15.</div>
<div class="r" style="top:558.86px;font-size:9.5px;letter-spacing:-0.07px;left:670px;">Mr. and Mrs. Paul Dore</div>
<div class="r" style="top:558.86px;font-size:9.5px;letter-spacing:0.156px;left:812.4px;">1017 Amber Creek Lane</div>
<div class="r" style="top:558.86px;font-size:9.5px;letter-spacing:0.232px;left:968px;">Big City, KY 40123</div>
<div class="r" style="top:558.86px;font-size:9.5px;letter-spacing:0.535px;left:1127.3px;">606.555.6373</div>
<div class="r" style="top:578.86px;font-size:9.5px;letter-spacing:0.097px;right:582.70px;">16.</div>
<div class="r" style="top:578.86px;font-size:9.5px;letter-spacing:-0.029px;left:670px;">Mr. &amp; Mrs. David Emerson</div>
<div class="r" style="top:578.86px;font-size:9.5px;letter-spacing:0.008px;left:812.4px;">2845 Sandy Creek Road</div>
<div class="r" style="top:578.86px;font-size:9.5px;letter-spacing:0.24px;left:968px;">Albany, NY 12212</div>
<div class="r" style="top:578.86px;font-size:9.5px;letter-spacing:0.535px;left:1127.3px;">518.555.1000</div>
<div class="r" style="top:597.86px;font-size:9.5px;letter-spacing:0.097px;right:582.70px;">17.</div>
<div class="r" style="top:597.86px;font-size:9.5px;letter-spacing:-0.011px;left:670px;">Mr. and Mrs. Jonathan Fields</div>
<div class="r" style="top:597.86px;font-size:9.5px;letter-spacing:0.247px;left:812.4px;">908 Lexington St.</div>
<div class="r" style="top:597.86px;font-size:9.5px;letter-spacing:0.232px;left:968px;">Big City, KY 40123</div>
<div class="r" style="top:597.86px;font-size:9.5px;letter-spacing:0.535px;left:1127.3px;">606.555.6040</div>
</div>
<div class="abs" style="left:0;top:0;width:2px;height:2px;background:#fff"></div><div class="abs" style="left:0;top:0;width:1px;height:1px;background:#000"></div>
<div class="abs" style="left:1248px;top:0;width:2px;height:2px;background:#fff"></div><div class="abs" style="left:1249px;top:0;width:1px;height:1px;background:#000"></div>
<div class="abs" style="left:0;top:668px;width:2px;height:2px;background:#fff"></div><div class="abs" style="left:0;top:669px;width:1px;height:1px;background:#000"></div>
<div class="abs" style="left:1248px;top:668px;width:2px;height:2px;background:#fff"></div><div class="abs" style="left:1249px;top:669px;width:1px;height:1px;background:#000"></div>
</body></html>
